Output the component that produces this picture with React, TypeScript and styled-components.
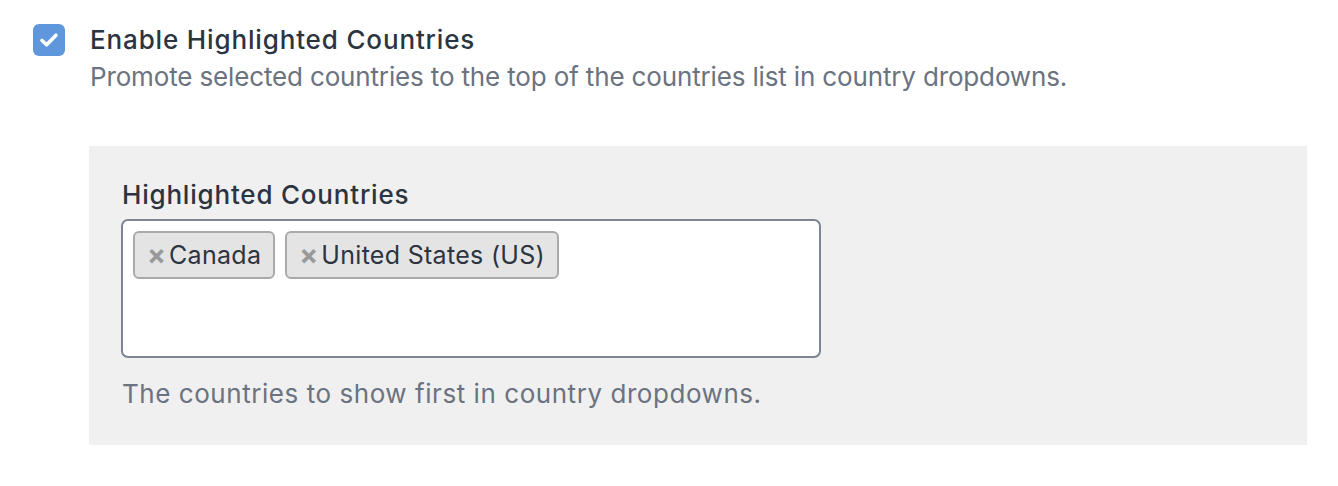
import styled, { createGlobalStyle } from 'styled-components'

const GlobalStyle = createGlobalStyle`
  html, body {
    margin: 0;
    padding: 0;
    background: #ffffff;
  }
  body {
    font-family: Inter, "Noto Sans", "Liberation Sans", sans-serif;
  }
`

const countries = ['Canada', 'United States (US)']

function App() {
  return (
    <Page>
      <GlobalStyle />
      <OptionRow>
        <CheckBox>
          <svg width="32" height="32" viewBox="0 0 32 32">
            <path
              d="M9 16.5 L13.6 20.8 L23 11.2"
              fill="none"
              stroke="#fff"
              strokeWidth="3.6"
              strokeLinecap="round"
              strokeLinejoin="round"
            />
          </svg>
        </CheckBox>
        <OptionText>
          <OptionTitle>Enable Highlighted Countries</OptionTitle>
          <OptionDesc>
            Promote selected countries to the top of the countries list in country dropdowns.
          </OptionDesc>
        </OptionText>
      </OptionRow>

      <SubPanel>
        <FieldLabel>Highlighted Countries</FieldLabel>
        <TagBox>
          {countries.map((name) => (
            <Tag key={name}>
              <TagRemove>×</TagRemove>
              {name}
            </Tag>
          ))}
        </TagBox>
        <HelpText>The countries to show first in country dropdowns.</HelpText>
      </SubPanel>
    </Page>
  )
}

const Page = styled.div`
  padding: 24px 31px 0 33px;
`

const OptionRow = styled.div`
  display: flex;
  align-items: flex-start;
  gap: 25px;
`

const CheckBox = styled.div`
  width: 32px;
  height: 32px;
  flex: none;
  border-radius: 6px;
  background: #5e97db;
  display: grid;
  place-items: center;
`

const OptionText = styled.div`
  display: flex;
  flex-direction: column;
`

const OptionTitle = styled.div`
  font-size: 26px;
  line-height: 32px;
  font-weight: 500;
  color: #2c3441;
  letter-spacing: 0.85px;
`

const OptionDesc = styled.div`
  margin-top: 6px;
  font-size: 26px;
  line-height: 30px;
  color: #6b7280;
  letter-spacing: -0.15px;
`

const SubPanel = styled.section`
  margin: 54px 0 0 56px;
  background: #f0f0f0;
  padding: 33px 33px 0;
  height: 299px;
  box-sizing: border-box;
`

const FieldLabel = styled.div`
  font-size: 26px;
  line-height: 32px;
  font-weight: 500;
  color: #2c3441;
  letter-spacing: 0.8px;
`

const TagBox = styled.div`
  width: 700px;
  height: 139px;
  box-sizing: border-box;
  margin: 8px 0 0 -1px;
  background: #fff;
  border: 2px solid #7c8591;
  border-radius: 7px;
  padding: 10px;
  display: flex;
  align-items: flex-start;
  gap: 10px;
`

const Tag = styled.div`
  height: 48px;
  box-sizing: border-box;
  display: flex;
  align-items: center;
  gap: 3px;
  padding: 0 12px 0 12px;
  background: #e4e4e4;
  border: 2px solid #aaaaaa;
  border-radius: 6px;
  font-size: 25px;
  letter-spacing: 0.3px;
  color: #2c3441;
`

const TagRemove = styled.span`
  font-size: 28px;
  font-weight: 700;
  color: #999999;
  line-height: 1;
  letter-spacing: 0;
`

const HelpText = styled.div`
  margin-top: 21px;
  font-size: 26px;
  line-height: 30px;
  color: #6b7280;
  letter-spacing: 0.55px;
`

export default App
